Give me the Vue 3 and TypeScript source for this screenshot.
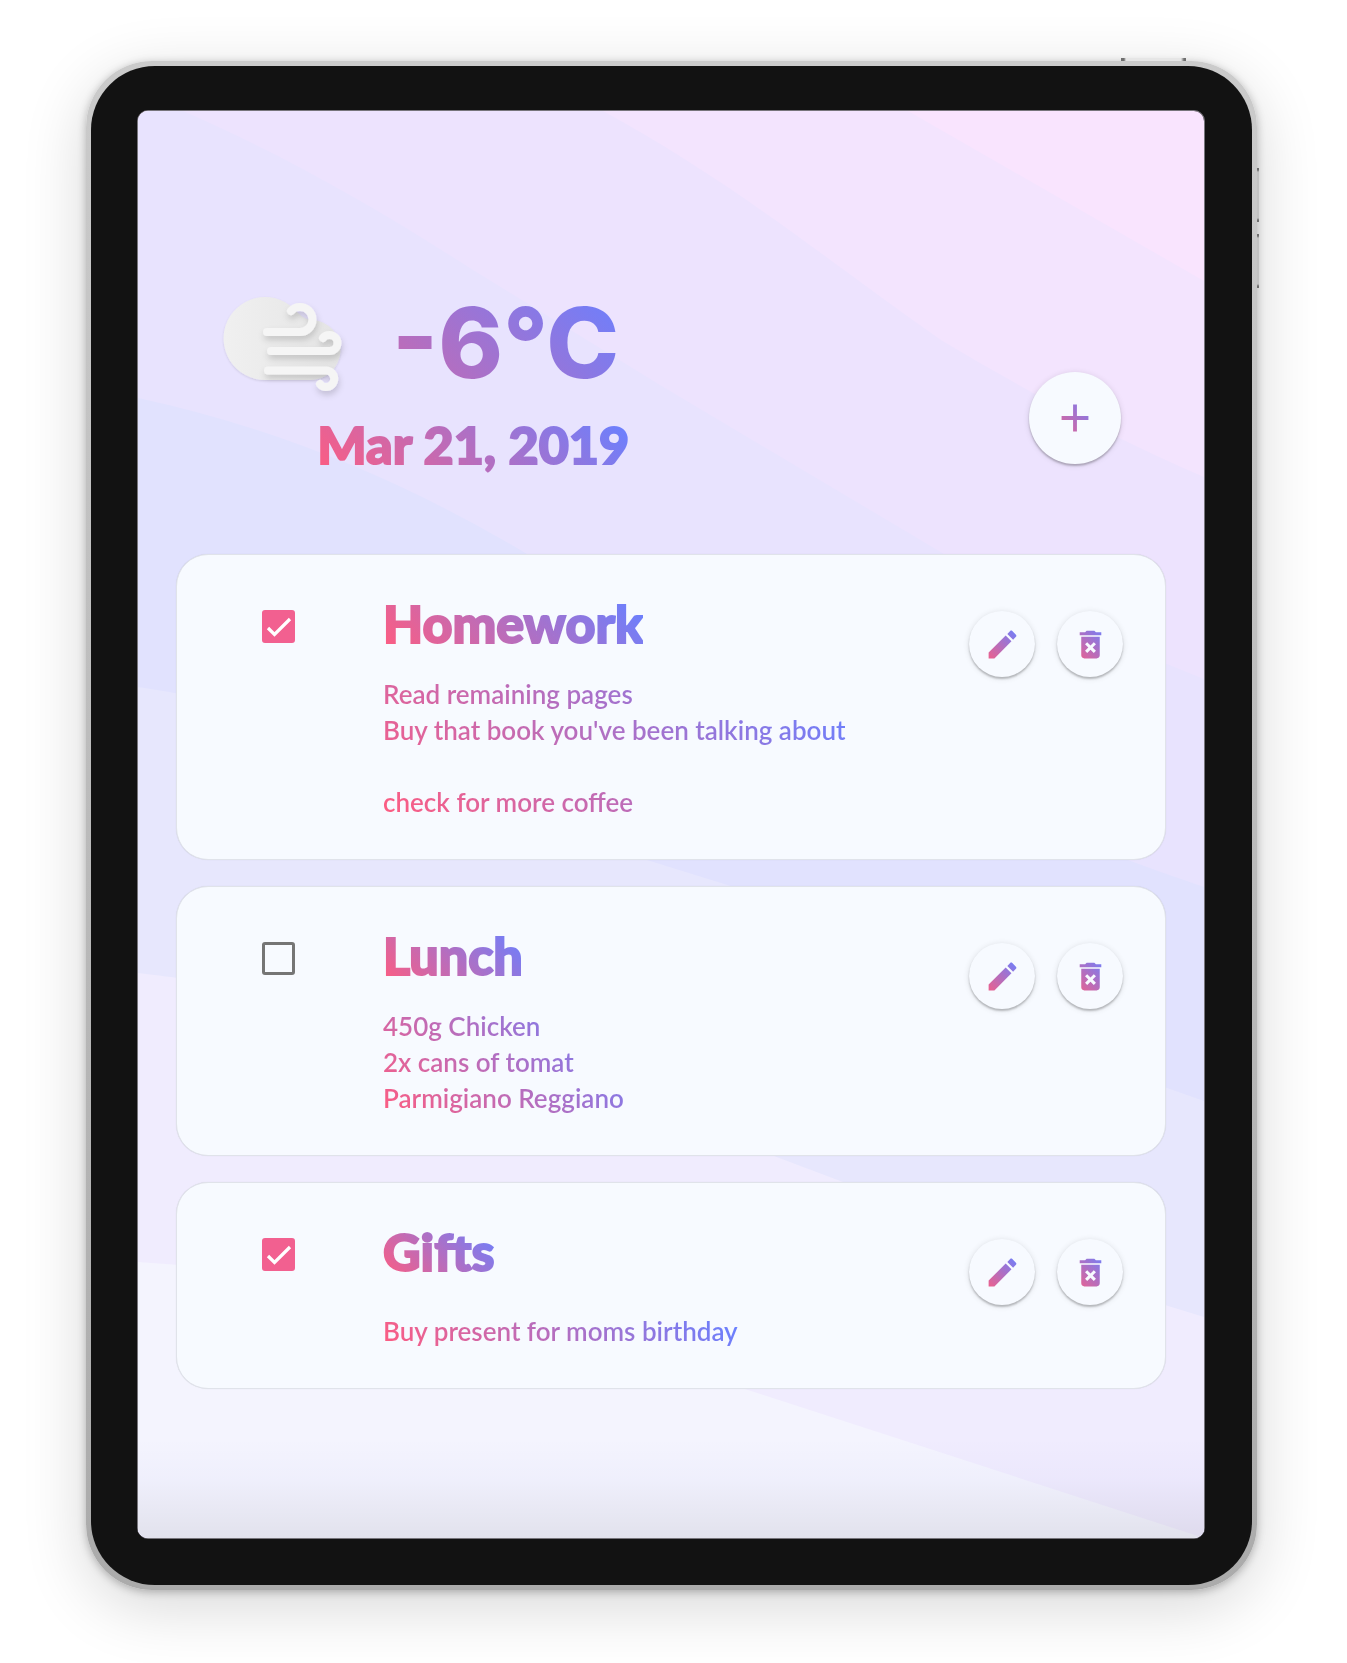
<script setup lang="ts">
import { ref } from 'vue'

interface Task {
  id: string
  title: string
  body: string
  done: boolean
}

const tasks = ref<Task[]>([
  {
    id: 'homework',
    title: 'Homework',
    body: "Read remaining pages\nBuy that book you've been talking about\n\ncheck for more coffee",
    done: true,
  },
  {
    id: 'lunch',
    title: 'Lunch',
    body: '450g Chicken\n2x cans of tomat\nParmigiano Reggiano',
    done: false,
  },
  {
    id: 'gifts',
    title: 'Gifts',
    body: 'Buy present for moms birthday',
    done: true,
  },
])
</script>

<template>
  <div class="stage">
    <div class="device">
      <span class="key key-power"></span>
      <span class="key key-up"></span>
      <span class="key key-down"></span>
      <div class="bezel">
        <main class="screen">
          <svg class="backdrop" viewBox="0 0 1066 1427" preserveAspectRatio="none" aria-hidden="true">
            <rect width="1066" height="1427" fill="#f9e4fe" />
            <path fill="#f3e4fe" d="M0 0H770L1066 170V1427H0Z" />
            <path fill="#ede3fe" d="M0 0H465C600 74 690 150 803 229C880 275 970 325 1066 366V1427H0Z" />
            <path fill="#e8e3fe" d="M0 0H45C150 46 240 98 335 159L522 274L806 443Q930 515 1066 568V1427H0Z" />
            <path fill="#e1e2fe" d="M0 287Q200 330 389 443Q720 660 1066 776V1427H0Z" />
            <path fill="#e7e7fd" d="M0 576Q260 615 509 749L596 776Q830 910 1066 990V1427H0Z" />
            <path fill="#f0ecfe" d="M0 862Q330 900 636 1045L705 1071Q880 1150 1066 1206V1427H0Z" />
            <path fill="#f4f4fe" d="M0 1151Q320 1170 604 1277L912 1377L1066 1427H0Z" />
          </svg>

          <svg class="defs" width="0" height="0" aria-hidden="true">
            <linearGradient id="ink" gradientUnits="userSpaceOnUse" x1="2" y1="22" x2="22" y2="2">
              <stop offset="0" stop-color="#f25f88" />
              <stop offset="1" stop-color="#6a80ff" />
            </linearGradient>
          </svg>

          <header class="top">
            <div class="today">
              <h1 class="weather ink">
                <svg class="cloud" width="126" height="102" viewBox="220 294 126 102" role="img" aria-label="Windy">
                  <defs>
                    <linearGradient id="cloudFill" x1="0" y1="0" x2="1" y2="0">
                      <stop offset="0" stop-color="#f0f0f0" />
                      <stop offset="1" stop-color="#e4e4e4" />
                    </linearGradient>
                    <filter id="soft" x="-20%" y="-20%" width="150%" height="150%">
                      <feDropShadow dx="1" dy="4" stdDeviation="3" flood-color="#000" flood-opacity="0.16" />
                    </filter>
                    <filter id="lift" x="-10%" y="-10%" width="120%" height="120%">
                      <feDropShadow dx="0" dy="1" stdDeviation="1" flood-color="#000" flood-opacity="0.12" />
                    </filter>
                  </defs>
                  <path
                    filter="url(#lift)"
                    fill="url(#cloudFill)"
                    d="M265 380A41.500 41.500 0 1 1 297 312Q305 320 312 320A30 30 0 0 1 309 380Z"
                  />
                  <g filter="url(#soft)" fill="none" stroke="#f5f5f5" stroke-width="8" stroke-linecap="round">
                    <path d="M267 332H300A12.500 12.500 0 0 0 300 307Q294 307 291 311" />
                    <path d="M271 351H329.500A8 8 0 0 0 329.500 335Q325 335 323 338" />
                    <path d="M268 370.500H326A8.250 8.250 0 0 1 326 387Q322 387 320 384" />
                  </g>
                </svg>
                <span class="degrees">-6°C</span>
              </h1>
              <p class="date ink">Mar 21, 2019</p>
            </div>
            <button class="round add" type="button" aria-label="Add task">
              <svg viewBox="0 0 24 24" width="46" height="46"><path fill="url(#ink)" d="M19 13h-6v6h-2v-6H5v-2h6V5h2v6h6v2z" /></svg>
            </button>
          </header>

          <section class="list" aria-label="Tasks">
            <article v-for="task in tasks" :key="task.id" class="card">
              <label class="tick">
                <input v-model="task.done" type="checkbox" :aria-label="task.title" />
                <svg v-if="task.done" viewBox="0 0 33 33" width="33" height="33" aria-hidden="true">
                  <polyline points="6,18 12.500,24.500 28,9" fill="none" stroke="#fff" stroke-width="3.200" />
                </svg>
              </label>
              <div class="content">
                <h2 class="title ink">{{ task.title }}</h2>
                <div class="note">
                  <p class="body ink">{{ task.body }}</p>
                </div>
              </div>
              <div class="actions">
                <button class="round" type="button" :aria-label="`Edit ${task.title}`">
                  <svg viewBox="0 0 24 24" width="37" height="37">
                    <path
                      fill="url(#ink)"
                      d="M3 17.250V21h3.750L17.810 9.940l-3.750-3.750L3 17.250zM20.710 7.040c.39-.39.39-1.020 0-1.410l-2.340-2.340c-.39-.39-1.020-.39-1.410 0l-1.830 1.830 3.750 3.750 1.830-1.830z"
                    />
                  </svg>
                </button>
                <button class="round" type="button" :aria-label="`Delete ${task.title}`">
                  <svg viewBox="0 0 24 24" width="37" height="37">
                    <path
                      fill="url(#ink)"
                      d="M6 19c0 1.100.9 2 2 2h8c1.100 0 2-.9 2-2V7H6v12zm2.460-7.120l1.410-1.410L12 12.590l2.120-2.120 1.410 1.410L13.410 14l2.120 2.120-1.410 1.410L12 15.410l-2.120 2.120-1.410-1.410L10.590 14l-2.130-2.120zM15.500 4l-1-1h-5l-1 1H5v2h14V4z"
                    />
                  </svg>
                </button>
              </div>
            </article>
          </section>
        </main>
      </div>
    </div>
  </div>
</template>

<style>
body {
  margin: 0;
  background: #fff;
}
</style>

<style scoped>
* {
  box-sizing: border-box;
}

.stage {
  padding: 61px 90px 73px 86px;
  overflow: hidden;
  font-family: Lato, "Open Sans", sans-serif;
}

.device {
  position: relative;
  padding: 5px;
  border-radius: 66px;
  background: linear-gradient(#cbcbcb, #ababab);
  box-shadow:
    0 2px 8px rgba(0, 0, 0, 0.25),
    0 16px 64px rgba(0, 0, 0, 0.16);
}

.key {
  position: absolute;
  --tip: #6e6e6e;
}

.key-power {
  top: -3px;
  right: 71px;
  width: 65px;
  height: 3px;
  background: linear-gradient(90deg, var(--tip) 3px, #e6e6e6 5px, #e6e6e6 60px, var(--tip) 63px);
}

.key-up,
.key-down {
  right: -2px;
  width: 2px;
  height: 54px;
  background: linear-gradient(var(--tip) 2px, #c2c2c2 4px, #c2c2c2 50px, var(--tip) 52px);
}

.key-up {
  top: 107px;
}

.key-down {
  top: 173px;
}

.bezel {
  padding: 44px 47px 46px 46px;
  border-radius: 64px;
  background: #121212;
}

.screen {
  position: relative;
  isolation: isolate;
  display: flex;
  flex-direction: column;
  min-height: 1429px;
  padding: 0 38px 40px;
  border: 1px solid #77757b;
  border-radius: 11px;
  overflow: hidden;
}

.screen::after {
  content: "";
  position: absolute;
  inset: auto 0 0;
  height: 100px;
  background: linear-gradient(rgba(0, 20, 160, 0), rgba(0, 20, 160, 0.02) 40%, rgba(0, 0, 20, 0.075));
  pointer-events: none;
}

.backdrop {
  position: absolute;
  inset: 0;
  z-index: -1;
  width: 100%;
  height: 100%;
}

.defs {
  position: absolute;
}

.ink {
  margin: 0;
  color: transparent;
  background: linear-gradient(45deg, #ff5c80, #6a80ff 96%);
  background-clip: text;
  -webkit-background-clip: text;
}

.top {
  display: flex;
  align-items: flex-end;
  justify-content: space-between;
  padding: 168px 45px 78px 44px;
}

.today {
  display: flex;
  flex-direction: column;
  align-items: flex-end;
}

.weather {
  display: flex;
  align-items: center;
  gap: 46px;
  padding-right: 10px;
  font-family: Inter, Lato, sans-serif;
  font-size: 98px;
  line-height: 128px;
  font-weight: 800;
}

.cloud {
  margin-top: 4px;
  overflow: visible;
}

.date {
  margin-top: 5px;
  font-size: 52px;
  line-height: 64px;
  font-weight: 900;
  -webkit-text-stroke: 2px transparent;
}

.round {
  display: grid;
  place-items: center;
  width: 66px;
  height: 66px;
  padding: 0;
  border: 0;
  border-radius: 50%;
  background: #f7faff;
  box-shadow:
    0 2px 2px rgba(0, 0, 0, 0.22),
    0 1px 6px rgba(0, 0, 0, 0.12);
  cursor: pointer;
}

.add {
  width: 92px;
  height: 92px;
  margin-bottom: 12px;
}

.list {
  display: flex;
  flex-direction: column;
  gap: 26px;
}

.card {
  display: grid;
  grid-template-columns: 206px 1fr auto;
  align-items: start;
  padding: 40px 42px 39px 0;
  border: 1px solid #e0e3ea;
  border-radius: 32px;
  background: #f7faff;
  box-shadow: 0 0 1px rgba(0, 0, 0, 0.12);
}

.tick {
  position: relative;
  width: 33px;
  height: 33px;
  margin: 15px 0 0 85px;
}

.tick input {
  display: block;
  width: 33px;
  height: 33px;
  margin: 0;
  border: 3px solid #757575;
  border-radius: 3px;
  appearance: none;
}

.tick input:checked {
  border-color: #f26090;
  background: #f26090;
}

.tick svg {
  position: absolute;
  inset: 0;
  pointer-events: none;
}

.title {
  width: fit-content;
  font-size: 52px;
  line-height: 56px;
  font-weight: 900;
  -webkit-text-stroke: 2px transparent;
}

.note {
  display: flex;
  align-items: flex-end;
  min-height: 45px;
  margin-top: 25px;
}

.body {
  font-size: 26px;
  line-height: 36px;
  font-weight: 600;
  white-space: pre-line;
}

.actions {
  display: flex;
  gap: 22px;
  margin-top: 16px;
}
</style>
